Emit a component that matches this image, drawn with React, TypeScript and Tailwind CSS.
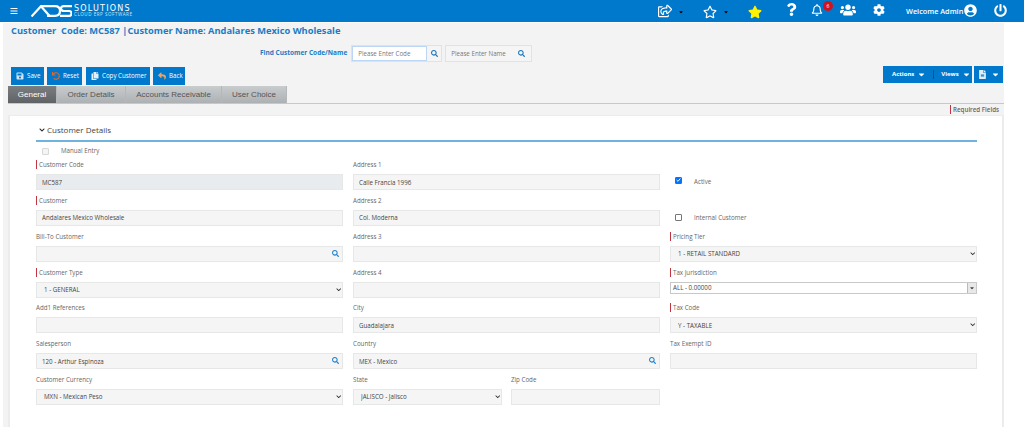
import React from 'react'
import {
  FaBars, FaRegShareSquare, FaRegStar, FaStar, FaQuestion, FaRegBell, FaUsers, FaCog,
  FaUserCircle, FaPowerOff, FaSearch, FaSave, FaUndo, FaCopy, FaReply, FaCaretDown,
  FaFileAlt, FaChevronDown,
} from 'react-icons/fa'

const sans = 'font-["Open_Sans",sans-serif]'
const rowCls = 'h-[35.85px] flex flex-col gap-[5px] pt-[2px]'

const Logo = () => (
  <div className="flex items-center ml-[13px] w-[110px]">
    <svg width="41" height="12" viewBox="0 0 41 12" fill="none" stroke="#fff" strokeWidth="2.2">
      <path d="M0.5 11.5 L10 1.2 H24 Q29 1.2 29 6 Q29 10.8 24 10.8 H16" />
      <path d="M10 1.2 L19 11.5" />
      <path d="M41 1.2 H33 Q30 1.2 30 3.6 Q30 6 33 6 H38 Q40.5 6 40.5 8.4 Q40.5 10.8 38 10.8 H29" />
    </svg>
    <div className="ml-[2px] flex flex-col text-white">
      <span className={`font-["DejaVu_Sans",sans-serif] text-[8px] leading-[7px] tracking-[1.2px] whitespace-nowrap`}>SOLUTIONS</span>
      <span className={`${sans} text-[4.5px] leading-[5px] tracking-[0.55px] whitespace-nowrap text-[#cfe6f6]`}>CLOUD ERP SOFTWARE</span>
    </div>
  </div>
)

const Header = () => (
  <header className="h-[22px] bg-[#0079cc] flex items-center text-white">
    <FaBars className="ml-[10px] text-[8px]" />
    <Logo />
    <div className="ml-auto flex items-center h-full relative w-[370px]">
      <FaRegShareSquare className="absolute left-[4px] top-[4px] text-[14px]" />
      <FaCaretDown className="absolute left-[24px] top-[9px] text-[6px] text-black" />
      <FaRegStar className="absolute left-[49px] top-[5px] text-[14px]" />
      <FaCaretDown className="absolute left-[69px] top-[9px] text-[6px] text-black" />
      <FaStar className="absolute left-[94px] top-[5px] text-[14px] text-[#fff200]" />
      <FaQuestion className="absolute left-[131px] top-[3px] text-[13px]" />
      <FaRegBell className="absolute left-[157px] top-[4px] text-[12px]" />
      <span className={`${sans} absolute left-[169px] top-[1px] w-[10px] h-[10px] rounded-full bg-[#d2131c] text-[5px] leading-[10px] text-center`}>6</span>
      <FaUsers className="absolute left-[186px] top-[2px] text-[16px]" />
      <FaCog className="absolute left-[219px] top-[4px] text-[12px]" />
      <span className={`${sans} absolute left-[252px] top-[6px] text-[7.3px] leading-[10px] font-semibold whitespace-nowrap`}>Welcome Admin</span>
      <FaUserCircle className="absolute left-[310px] top-[4px] text-[13px]" />
      <FaPowerOff className="absolute left-[340px] top-[4px] text-[13px]" />
    </div>
  </header>
)

const ActionButton = ({ icon, label, width }: { icon: React.ReactNode; label: string; width: string }) => (
  <button className={`${sans} ${width} h-[18px] pl-[5px] bg-[#0079cc] text-white text-[6.2px] flex items-center gap-[3px] whitespace-nowrap`}>
    {icon}
    {label}
  </button>
)

const Tab = ({ label, width, active }: { label: string; width: string; active?: boolean }) => (
  <div
    className={`${width} h-[17px] flex items-center justify-center font-["Liberation_Sans",sans-serif] text-[8px] border-r border-[#b4b8ba] ${
      active ? 'bg-gradient-to-b from-[#7b7e80] to-[#606365] text-white' : 'bg-gradient-to-b from-[#c9cccd] to-[#adb1b3] text-[#555]'
    }`}
  >
    {label}
  </div>
)

const Label = ({ text, req }: { text: string; req?: boolean }) => (
  <div className={`${sans} h-[9px] text-[6.2px] leading-[9px] text-[#666] flex items-center whitespace-nowrap`}>
    {req && <span className="w-[1px] h-[9px] bg-[#c0353f] mr-[2px]" />}
    {text}
  </div>
)

const boxCls = `${sans} block w-full h-[16px] border border-[#e6e8e8] text-[6.2px] text-[#444] outline-none`

const TextField = ({ label, value = '', req, dim, search }: { label: string; value?: string; req?: boolean; dim?: boolean; search?: boolean }) => (
  <div className={rowCls}>
    <Label text={label} req={req} />
    <div className="relative">
      <input readOnly value={value} className={`${boxCls} px-[5px] ${dim ? 'bg-[#e9ecef]' : 'bg-[#f5f5f5]'}`} />
      {search && <FaSearch className="absolute right-[4px] top-[4px] text-[7px] text-[#1e82c8]" />}
    </div>
  </div>
)

const SelectField = ({ label, value, req }: { label: string; value: string; req?: boolean }) => (
  <div className={rowCls}>
    <Label text={label} req={req} />
    <div className="relative">
      <select defaultValue={value} className={`${boxCls} bg-[#f5f5f5] pl-[7px] appearance-none`}>
        <option>{value}</option>
      </select>
      <FaChevronDown className="absolute right-[2px] top-[5px] text-[5.5px] text-[#222]" />
    </div>
  </div>
)

const CheckBox = ({ checked, disabled }: { checked?: boolean; disabled?: boolean }) => (
  <span
    className={`w-[7px] h-[7px] rounded-[1px] border flex items-center justify-center ${
      checked ? 'bg-[#0075ff] border-[#0075ff]' : disabled ? 'bg-[#f4f4f4] border-[#d8d8d8]' : 'bg-white border-[#767676]'
    }`}
  >
    {checked && (
      <svg width="6" height="6" viewBox="0 0 6 6" fill="none" stroke="#fff" strokeWidth="1.1">
        <path d="M0.8 3 L2.4 4.6 L5.2 1.2" />
      </svg>
    )}
  </span>
)

const CheckRow = ({ label, checked, lift }: { label: string; checked?: boolean; lift: string }) => (
  <div className="h-[35.85px] flex items-end pb-[4px]">
    <div className={`${sans} flex items-center h-[16px] text-[6.2px] text-[#666]`}>
      <span className={`ml-[5px] mr-[12px] ${lift}`}>
        <CheckBox checked={checked} />
      </span>
      {label}
    </div>
  </div>
)

const Form = () => (
  <div className="ml-[26px] mr-[25px] grid grid-cols-3 gap-x-[10px]">
    <div className="flex flex-col">
      <TextField label="Customer Code" value="MC587" req dim />
      <TextField label="Customer" value="Andalares Mexico Wholesale" req />
      <TextField label="Bill-To Customer" search />
      <SelectField label="Customer Type" value="1 - GENERAL" req />
      <TextField label="Add1 References" />
      <TextField label="Salesperson" value="120 - Arthur Espinoza" search />
      <SelectField label="Customer Currency" value="MXN - Mexican Peso" />
    </div>
    <div className="flex flex-col">
      <TextField label="Address 1" value="Calle Francia 1996" />
      <TextField label="Address 2" value="Col. Moderna" />
      <TextField label="Address 3" />
      <TextField label="Address 4" />
      <TextField label="City" value="Guadalajara" />
      <TextField label="Country" value="MEX - Mexico" search />
      <div className="grid grid-cols-2 gap-x-[9px]">
        <SelectField label="State" value="JALISCO - Jalisco" />
        <TextField label="Zip Code" />
      </div>
    </div>
    <div className="flex flex-col">
      <CheckRow label="Active" checked lift="-mt-[3px]" />
      <CheckRow label="Internal Customer" lift="-mt-[1px]" />
      <SelectField label="Pricing Tier" value="1 - RETAIL STANDARD" req />
      <div className={rowCls}>
        <Label text="Tax Jurisdiction" req />
        <div className={`${sans} relative h-[12px] border border-[#c8c8c8] bg-white text-[6.2px] leading-[10px] text-[#444] px-[2px]`}>
          ALL - 0.00000
          <div className="absolute right-0 top-0 w-[9px] h-full bg-[#e8e8e8] border-l border-[#bbb] flex items-center justify-center">
            <FaCaretDown className="text-[6px] text-[#444]" />
          </div>
        </div>
      </div>
      <SelectField label="Tax Code" value="Y - TAXABLE" req />
      <TextField label="Tax Exempt ID" />
    </div>
  </div>
)

export default function App() {
  return (
    <div className="w-[1024px] h-[431px] bg-white overflow-hidden">
      <Header />
      <main className="mt-[1px] ml-[3px] w-[1001px] h-[404px] bg-[#f3f3f3] flex flex-col">
        <h1 className={`${sans} mt-[1px] ml-[8px] h-[14px] text-[9.3px] leading-[14px] font-bold text-[#1a7cc4] whitespace-pre`}>
          {'Customer  Code: MC587 |Customer Name: Andalares Mexico Wholesale'}
        </h1>
        <div className="mt-[6px] ml-[257px] h-[18px] flex items-center">
          <span className={`${sans} text-[6.5px] font-bold text-[#1a7cc4] mr-[4px] whitespace-nowrap`}>Find Customer Code/Name</span>
          <div className="w-[91px] h-[17px] flex bg-[#f5f5f5] border border-[#e2e2e2]">
            <input readOnly placeholder="Please Enter Code" className={`${sans} block w-[75px] h-full bg-white border border-[#bcd7f5] text-[6.2px] px-[5px] outline-none placeholder:text-[#777]`} />
            <FaSearch className="ml-[4px] mt-[4px] text-[7px] text-[#1b75bb]" />
          </div>
          <div className="relative ml-[3px] w-[87px] h-[17px] bg-[#f5f5f5] border border-[#e2e2e2]">
            <input readOnly placeholder="Please Enter Name" className={`${sans} block w-[70px] h-full bg-transparent text-[6.2px] px-[5px] outline-none placeholder:text-[#777]`} />
            <FaSearch className="absolute right-[6px] top-[4px] text-[7px] text-[#1b75bb]" />
          </div>
        </div>
        <div className="mt-[5px] ml-[8px] mr-[1px] h-[19px] flex items-start">
          <div className="flex">
            <ActionButton width="w-[33px] mr-[3px]" icon={<FaSave className="text-[8px] text-[#cfe3f2]" />} label="Save" />
            <ActionButton width="w-[35px] mr-[4px]" icon={<FaUndo className="text-[8px] text-[#e2662a]" />} label="Reset" />
            <ActionButton width="w-[64px] mr-[3px]" icon={<FaCopy className="text-[8px] text-[#e4eef6]" />} label="Copy Customer" />
            <ActionButton width="w-[32px]" icon={<FaReply className="text-[8px] text-[#f0a35a]" />} label="Back" />
          </div>
          <div className={`${sans} ml-auto flex gap-[2px] text-white text-[6px] font-bold -mt-[1px]`}>
            <div className="w-[89px] h-[17px] pl-[9px] bg-[#0079cc] flex items-center gap-[3px]">
              Actions <FaCaretDown className="text-[9px]" />
              <span className="w-[1px] h-[9px] bg-[#0a4f86] mx-[4px]" />
              Views <FaCaretDown className="text-[9px]" />
            </div>
            <div className="w-[29px] h-[17px] bg-[#0079cc] flex items-center justify-center gap-[4px]">
              <FaFileAlt className="text-[9px] text-[#e4eef6]" />
              <FaCaretDown className="text-[9px]" />
            </div>
          </div>
        </div>
        <div className="ml-[5px] flex border-b border-[#c8c8c8] h-[18px]">
          <Tab label="General" width="w-[49px]" active />
          <Tab label="Order Details" width="w-[69px]" />
          <Tab label="Accounts Receivable" width="w-[96px]" />
          <Tab label="User Choice" width="w-[65px]" />
        </div>
        <div className="h-[11px] flex items-center justify-end pr-[5px] font-semibold">
          <Label text="Required Fields" req />
        </div>
        <section className="ml-[5px] flex-1 bg-white border-x-2 border-t border-[#ececec]">
          <div className={`${sans} ml-[26px] mr-[25px] h-[25px] mt-[1px] pt-[3px] border-b-2 border-[#6fb3e0] flex items-center pl-[3px] text-[8px] text-[#444]`}>
            <FaChevronDown className="text-[6px] text-[#222] mr-[2px]" />
            Customer Details
          </div>
          <div className={`${sans} h-[16px] ml-[32px] pt-[2px] flex items-center text-[6.2px] text-[#666]`}>
            <span className="mr-[12px]">
              <CheckBox disabled />
            </span>
            Manual Entry
          </div>
          <Form />
        </section>
      </main>
    </div>
  )
}
